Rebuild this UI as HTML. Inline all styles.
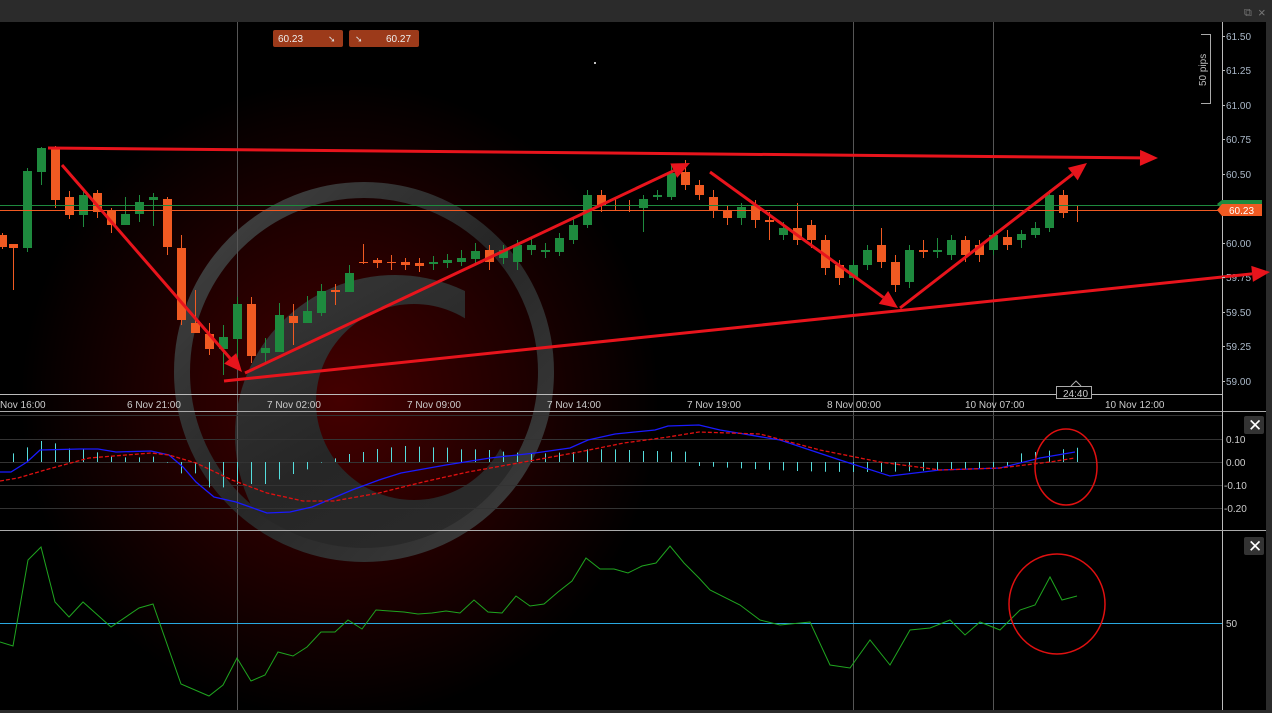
<!DOCTYPE html>
<html><head><meta charset="utf-8"><style>
html,body{margin:0;padding:0;background:#000;width:1272px;height:713px;overflow:hidden;font-family:"Liberation Sans",sans-serif}
svg text{font-family:"Liberation Sans",sans-serif}
</style></head><body>
<svg id="s" width="1272" height="713" xmlns="http://www.w3.org/2000/svg">
<defs>
<radialGradient id="glow" cx="340" cy="400" r="320" gradientUnits="userSpaceOnUse">
<stop offset="0" stop-color="#440000"/><stop offset="0.55" stop-color="#200000"/><stop offset="1" stop-color="#000"/></radialGradient>
<linearGradient id="cg" x1="0" y1="0" x2="1" y2="1"><stop offset="0" stop-color="#5a5a5a"/><stop offset="0.45" stop-color="#262626"/><stop offset="0.8" stop-color="#333"/><stop offset="1" stop-color="#444"/></linearGradient>
<linearGradient id="rg" x1="0" y1="0" x2="1" y2="1"><stop offset="0" stop-color="#444"/><stop offset="0.5" stop-color="#262626"/><stop offset="1" stop-color="#3e3e3e"/></linearGradient>
<mask id="cm"><rect width="1272" height="713" fill="#000"/>
<circle cx="395" cy="435" r="160" fill="#fff"/>
<circle cx="414" cy="402" r="98" fill="#000"/>
<polygon points="465,250 570,250 570,455 505,455 465,402" fill="#000"/>
</mask>
<clipPath id="rc"><circle cx="364" cy="372" r="176"/></clipPath>
</defs>
<rect width="1272" height="713" fill="#000"/>
<rect x="0" y="22" width="1222" height="690" fill="url(#glow)"/>
<circle cx="364" cy="372" r="182" fill="none" stroke="url(#rg)" stroke-width="16"/>
<g clip-path="url(#rc)"><rect width="1272" height="713" fill="url(#cg)" mask="url(#cm)"/></g>
<rect x="0" y="0" width="1272" height="22" fill="#2b2b2b"/>
<text x="1244" y="16" fill="#777" font-size="11">⧉</text><text x="1258" y="17" fill="#777" font-size="13">×</text>
<rect x="1266" y="22" width="6" height="691" fill="#2b2b2b"/>
<rect x="0" y="710" width="1272" height="3" fill="#2b2b2b"/>
<g stroke="#555" stroke-width="1"><line x1="237.5" y1="22" x2="237.5" y2="710"/><line x1="853.5" y1="22" x2="853.5" y2="710"/><line x1="993.5" y1="22" x2="993.5" y2="710"/></g>
<line x1="1222.5" y1="22" x2="1222.5" y2="710" stroke="#bbb"/>
<line x1="0" y1="394.5" x2="1222" y2="394.5" stroke="#bbb"/>
<line x1="0" y1="411.5" x2="1266" y2="411.5" stroke="#aaa"/>
<line x1="0" y1="530.5" x2="1266" y2="530.5" stroke="#aaa"/>
<g id="cand"></g>
<line x1="0" y1="205.5" x2="1222" y2="205.5" stroke="#1e8a3e"/>
<line x1="0" y1="210.5" x2="1222" y2="210.5" stroke="#f05a22"/>
<g fill="#aab8c8" font-size="10" id="pl"></g>
<g fill="#ccc" font-size="10">
<text x="0" y="408">Nov 16:00</text><text x="127" y="408">6 Nov 21:00</text><text x="267" y="408">7 Nov 02:00</text><text x="407" y="408">7 Nov 09:00</text><text x="547" y="408">7 Nov 14:00</text><text x="687" y="408">7 Nov 19:00</text><text x="827" y="408">8 Nov 00:00</text><text x="965" y="408">10 Nov 07:00</text><text x="1105" y="408">10 Nov 12:00</text></g>
<rect x="1056.5" y="386.5" width="35" height="12" fill="#000" stroke="#aaa"/><text x="1063" y="397" fill="#ccc" font-size="10">24:40</text>
<path d="M1071 386 L1076 381 L1081 386" fill="#000" stroke="#aaa"/>
<path d="M1201 34.5 H1210.5 V103.5 H1201" fill="none" stroke="#aaa"/>
<text transform="translate(1206 86) rotate(-90)" fill="#bbb" font-size="10">50 pips</text>
<path d="M1217 204 L1222 200 H1262 V209 H1222 Z" fill="#1e8a3e"/>
<path d="M1217 210 L1222 204 H1262 V216 H1222 Z" fill="#f05a22"/>
<text x="1229" y="214" fill="#fff" font-size="10">60.23</text>
<rect x="273" y="30" width="70" height="17" rx="2" fill="#9c3a1a"/><text x="278" y="42" fill="#eee" font-size="10">60.23</text><text x="328" y="42" fill="#ddd" font-size="9">➘</text>
<rect x="349" y="30" width="70" height="17" rx="2" fill="#9c3a1a"/><text x="355" y="42" fill="#ddd" font-size="9">➘</text><text x="386" y="42" fill="#eee" font-size="10">60.27</text>
<circle cx="595" cy="63" r="1" fill="#fff"/>
<g stroke="#333"><line x1="0" y1="415.5" x2="1222" y2="415.5"/><line x1="0" y1="439.5" x2="1222" y2="439.5"/><line x1="0" y1="462.5" x2="1222" y2="462.5"/><line x1="0" y1="485.5" x2="1222" y2="485.5"/><line x1="0" y1="508.5" x2="1222" y2="508.5"/></g>
<g fill="#ccc" font-size="10"><text x="1226" y="443">0.10</text><text x="1226" y="466">0.00</text><text x="1224" y="489">-0.10</text><text x="1224" y="512">-0.20</text><text x="1226" y="627">50</text></g>
<g id="hist"></g>
<polyline fill="none" stroke="#1a1aff" stroke-width="1.3" points="0,472 11,472 27,462 40,450 80,449 98,449 116,452 151,451 169,455 183,467 196,482 214,497 236,502 267,513 290,512 312,507 352,490 379,480 401,473 446,465 490,458 535,453 570,448 588,440 615,434 655,430 668,426 699,425 720,430 780,440 840,460 890,476 940,470 1000,468 1040,458 1075,452"/>
<polyline fill="none" stroke="#e01010" stroke-width="1.3" stroke-dasharray="4,2" points="0,481 18,478 45,470 89,458 151,453 169,455 196,463 232,480 267,493 303,501 334,501 379,493 423,482 468,472 535,460 579,452 624,443 668,437 699,432 760,434 820,450 880,462 940,470 1000,468 1050,462 1075,458"/>
<ellipse cx="1066" cy="467" rx="31" ry="38" fill="none" stroke="#e01010" stroke-width="1.5"/>
<line x1="0" y1="623.5" x2="1222" y2="623.5" stroke="#29a8e0"/>
<polyline fill="none" stroke="#1fa51f" stroke-width="1" points="0,642 13,646 28,560 41,547 55,602 69,617 83,602 111,627 139,608 153,604 181,684 209,696 223,685 237,658 251,681 265,675 278,652 293,656 307,647 321,632 335,632 348,620 362,629 376,610 404,612 418,614 432,613 446,611 460,613 474,600 488,612 502,613 516,596 530,606 544,604 558,592 572,581 586,558 600,569 614,569 628,573 642,566 656,563 670,546 684,563 699,578 710,590 740,605 760,620 780,625 810,622 830,665 850,668 870,640 890,665 910,630 930,628 950,620 965,635 980,622 1000,630 1020,610 1035,605 1050,577 1062,600 1077,596"/>
<ellipse cx="1057" cy="604" rx="48" ry="50" fill="none" stroke="#e01010" stroke-width="1.5"/>
<rect x="1244" y="416" width="20" height="18" rx="2" fill="#333"/><text x="1248" y="431" fill="#fff" font-size="17">✕</text>
<rect x="1244" y="537" width="20" height="18" rx="2" fill="#333"/><text x="1248" y="552" fill="#fff" font-size="17">✕</text>
<g id="arr" stroke="#e8141c" stroke-width="3" fill="#e8141c"></g>
</svg>
<script>
var NS="http://www.w3.org/2000/svg";
function el(p,t,a){var e=document.createElementNS(NS,t);for(var k in a)e.setAttribute(k,a[k]);p.appendChild(e);return e;}
var pl=document.getElementById('pl');
[["61.50",36],["61.25",70],["61.00",105],["60.75",139],["60.50",174],["60.00",243],["59.75",277],["59.50",312],["59.25",346],["59.00",381]].forEach(function(v){el(pl,'text',{x:1226,y:v[1]+4}).textContent=v[0];el(document.getElementById('s'),'line',{x1:1222,y1:v[1]+.5,x2:1225,y2:v[1]+.5,stroke:'#bbb'});});
var C=[[2,235,247,233,249],[13,244,248,244,290],[27,248,171,252,168],[41,172,148,185,147],[55,148,200,146,208],[69,197,215,191,219],[83,215,195,227,190],[97,193,212,190,218],[111,210,225,208,233],[125,225,214,225,197],[139,214,202,222,195],[153,200,197,226,193],[167,199,247,197,255],[181,248,320,235,325],[195,323,333,290,333],[209,334,349,323,355],[223,349,337,375,325],[237,339,304,360,297],[251,304,356,297,363],[265,353,348,362,338],[279,352,315,352,303],[293,316,323,304,345],[307,323,311,320,296],[321,313,291,316,284],[335,290,292,284,305],[349,292,273,290,265],[363,262,262,264,244],[377,260,263,258,268],
[391,262,263,255,270],[405,262,265,258,270],[419,263,266,258,272],[433,264,262,256,270],[447,263,260,254,268],[461,262,258,250,266],[475,259,251,243,265],[489,250,262,245,270],[503,258,250,245,264],[517,262,245,240,270],[531,250,245,238,255],[545,252,250,243,258],[559,252,238,233,256],[573,240,225,218,244],[587,225,195,190,228],[601,195,205,190,212],[615,205,205,198,210],[629,205,206,200,212],[643,208,199,195,232],[657,197,195,190,200],[671,197,173,165,200],[685,172,185,160,190],[699,185,195,180,200],[713,197,210,190,218],[727,210,218,205,225],[741,218,207,203,225],[755,205,220,200,228],[769,220,222,212,240],[783,235,228,222,240],[797,228,240,203,245],[811,225,240,220,248],[825,240,268,235,275],[839,265,278,260,285],[853,278,265,260,285],[867,265,250,245,270],[881,245,262,228,268],[895,262,285,255,292],[909,282,250,245,288],[923,250,252,240,258],[937,252,250,238,258],[951,255,240,235,260],[965,240,255,236,262],[979,245,255,240,262],[993,250,235,230,255],[1007,237,245,230,250],[1021,240,234,230,248],[1035,235,228,222,238],[1049,228,195,190,232],[1063,195,213,190,218],[1077,210,211,205,222]];
var g=document.getElementById('cand');
C.forEach(function(c){var up=c[2]<c[1];var col=up?'#1e8a3e':'#f05a22';
el(g,'line',{x1:c[0]+.5,y1:c[3],x2:c[0]+.5,y2:c[4],stroke:col});
var t=Math.min(c[1],c[2]),b=Math.max(c[1],c[2]);el(g,'rect',{x:c[0]-4,y:t,width:9,height:Math.max(1,b-t),fill:col});});
var h=document.getElementById('hist');
var HV=[130,112,93,100,115,117,127,140,142,142,140,158,190,190,232,232,222,222,222,208,192,178,158,145,132,126,117,112,108,110,112,113,118,118,120,125,128,130,130,128,126,118,118,118,120,123,123,125,125];
for(var i=0;i<HV.length;i++){var x=13+14*i;el(h,'line',{x1:x+.5,y1:462,x2:x+.5,y2:410+HV[i]/3,stroke:'#5dd'});}
for(var x=13+14*HV.length;x<1080;x+=14){var v=x<1015?4+Math.sin((x-700)/315*Math.PI)*6:-8-(x-1015)/10;el(h,'line',{x1:x+.5,y1:462,x2:x+.5,y2:462+v,stroke:'#5dd'});}
var a=document.getElementById('arr');
function arrow(x1,y1,x2,y2){var dx=x2-x1,dy=y2-y1,L=Math.hypot(dx,dy),ux=dx/L,uy=dy/L,s=18,w=8;
var bx=x2-ux*s,by=y2-uy*s;el(a,'line',{x1:x1,y1:y1,x2:bx,y2:by});
el(a,'polygon',{points:x2+','+y2+' '+(bx-uy*w)+','+(by+ux*w)+' '+(bx+uy*w)+','+(by-ux*w),stroke:'none'});}
arrow(48,148,1158,158);arrow(62,165,242,372);arrow(224,381,1270,272);arrow(245,373,690,163);arrow(710,172,898,308);arrow(900,308,1087,163);
</script>
</body></html>
